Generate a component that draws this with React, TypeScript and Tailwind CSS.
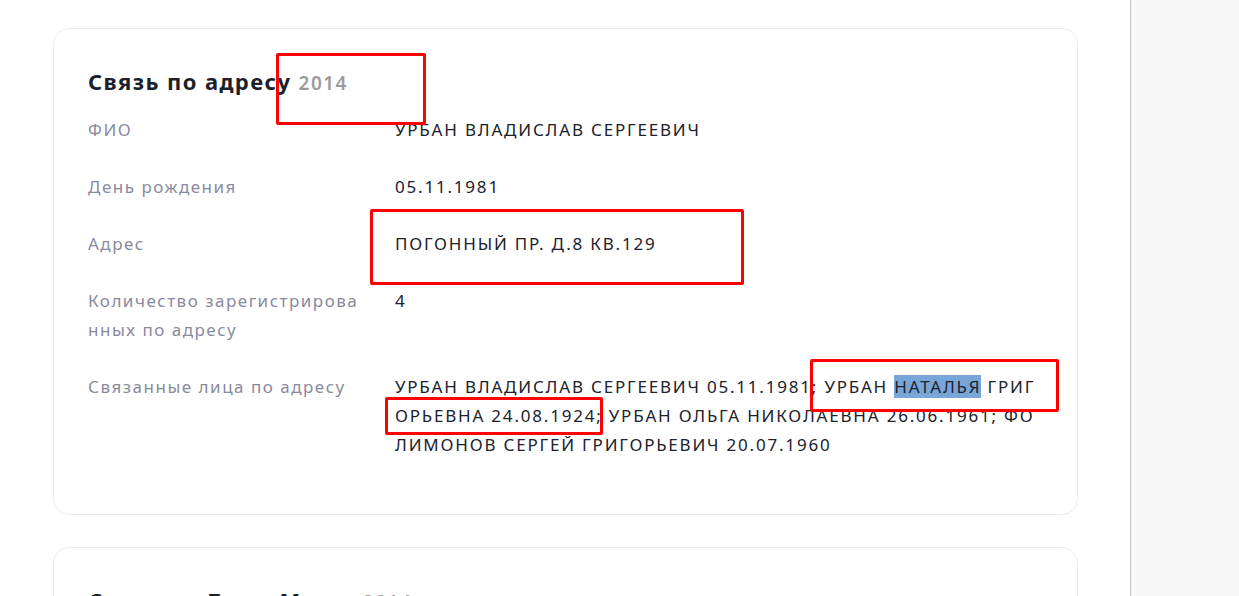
import { JSX } from 'react';

const rows: { label: string[]; value: JSX.Element }[] = [
	{ label: ['ФИО'], value: <>УРБАН ВЛАДИСЛАВ СЕРГЕЕВИЧ</> },
	{ label: ['День рождения'], value: <>05.11.1981</> },
	{ label: ['Адрес'], value: <>ПОГОННЫЙ ПР. Д.8 КВ.129</> },
	{ label: ['Количество зарегистрирова', 'нных по адресу'], value: <>4</> },
	{
		label: ['Связанные лица по адресу'],
		value: (
			<>
				<span className="block">
					УРБАН ВЛАДИСЛАВ СЕРГЕЕВИЧ 05.11.1981; УРБАН{' '}
					<span className="bg-[#78a6d8]">НАТАЛЬЯ</span> ГРИГ
				</span>
				<span className="block">ОРЬЕВНА 24.08.1924; УРБАН ОЛЬГА НИКОЛАЕВНА 26.06.1961; ФО</span>
				<span className="block">ЛИМОНОВ СЕРГЕЙ ГРИГОРЬЕВИЧ 20.07.1960</span>
			</>
		),
	},
];

const Mark = ({ className }: { className: string }) => (
	<div className={`absolute border-[3px] border-[#ff0000] rounded-[2px] ${className}`} />
);

const App = (): JSX.Element => {
	return (
		<div className="relative flex h-[596px] overflow-hidden bg-white font-['Noto_Sans',sans-serif]">
			<main className="w-[1130px] shrink-0 pl-[53px] pt-[28px] flex flex-col gap-[32px]">
				<section className="w-[1025px] h-[487px] shrink-0 border border-[#ebebef] rounded-[16px] px-[34px] pt-[37px]">
					<h2 className="text-[22px] leading-[30px] font-bold tracking-[1.4px] text-[#1e1f2b] whitespace-nowrap">
						Связь по адресу{' '}
						<span className="text-[19px] font-semibold tracking-[1.5px] text-[#9b9b9b]">2014</span>
					</h2>
					<div className="mt-[17px] grid grid-cols-[280px_1fr] gap-x-[27px] gap-y-[28px] text-[17px] leading-[29px] whitespace-nowrap">
						{rows.map((r, i) => (
							<div key={i} className="contents">
								<div className="text-[#8a8a9e] tracking-[1.5px]">
									{r.label.map((l, j) => (
										<span key={j} className="block">
											{l}
										</span>
									))}
								</div>
								<div className="text-[#20212b] tracking-[1.8px]">{r.value}</div>
							</div>
						))}
					</div>
				</section>
				<section className="w-[1025px] h-[200px] shrink-0 border border-[#ebebef] rounded-[16px] px-[34px] pt-[37px]">
					<h2 className="text-[22px] leading-[30px] font-bold tracking-[1.4px] text-[#1e1f2b] whitespace-nowrap">
						Связь по Дому Места{' '}
						<span className="text-[19px] font-semibold tracking-[1.5px] text-[#9b9b9b]">2014</span>
					</h2>
				</section>
			</main>
			<aside className="flex-1 border-l border-[#c4c4c4] bg-[#f7f7f7]" />

			<Mark className="left-[276px] top-[53px] w-[150px] h-[72px]" />
			<Mark className="left-[370px] top-[209px] w-[374px] h-[76px]" />
			<Mark className="left-[810px] top-[359px] w-[249px] h-[53px]" />
			<Mark className="left-[385px] top-[397px] w-[218px] h-[38px]" />
		</div>
	);
};

export default App;
